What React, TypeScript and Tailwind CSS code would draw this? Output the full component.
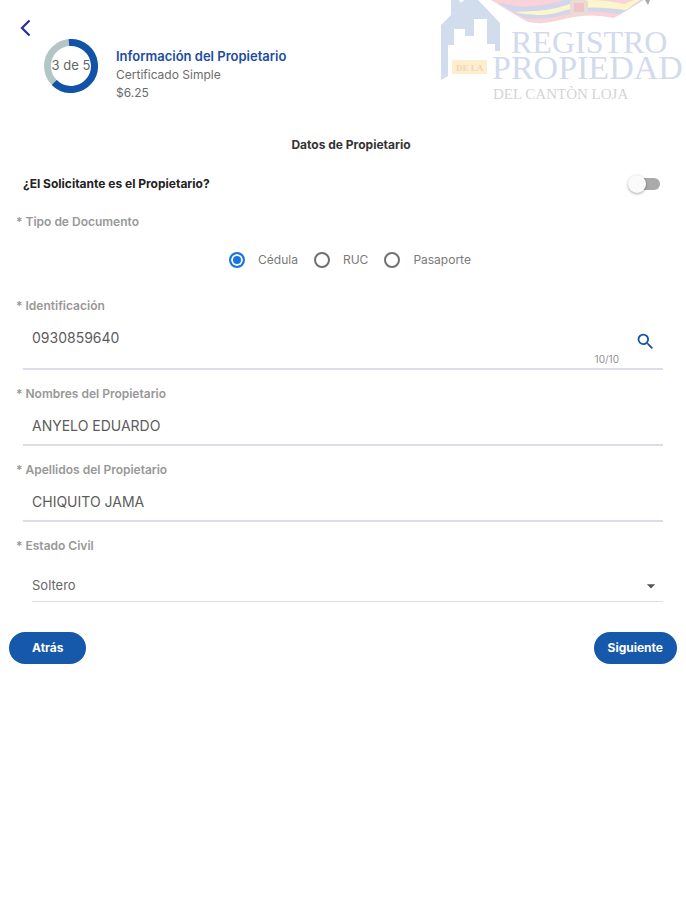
import React, { useState } from "react";
import { MdArrowDropDown, MdSearch } from "react-icons/md";

const RegistroLogo: React.FC = () => (
  <svg
    width="256"
    height="110"
    viewBox="0 0 256 110"
    className="shrink-0"
    role="img"
    aria-label="Registro de la Propiedad del Cantòn Loja"
  >
    {/* flag */}
    <path d="M61 0Q80 12 98 22Q112 25 130 20Q158 12 184 18Q200 9 214 0Z" fill="#f9d3d8" />
    <path d="M70 4Q82 12 94 18Q112 21 134 15Q160 9 190 14L212 0H70Z" fill="#d3d6ea" />
    <path d="M84 12Q112 19 136 10Q160 5 196 10L210 0H150Q120 12 84 12Z" fill="#fbf7cc" />
    <path d="M68 0Q82 11 104 11Q128 10 150 0Z" fill="#d3d6ea" />
    <path d="M62 0Q84 8 104 6Q122 4 134 0Z" fill="#f9d3d8" />
    <path d="M160 0Q176 0 194 4L204 0Z" fill="#f9d3d8" />
    <rect x="140" y="0" width="18" height="15" rx="3" fill="#e9dcd5" />
    <rect x="144" y="3" width="10" height="9" fill="#efc3c9" />
    <path d="M215 0H220L218 5Z" fill="#a9a9a9" />
    {/* buildings */}
    <path
      d="M11 80V25L21 15V0H29L31 3L34 0H48L70 23V51H65V44H57V19H44V36H35V29H24V45H18V76Z"
      fill="#d1dded"
    />
    <rect x="22" y="60" width="35" height="14" fill="#fdefcd" />
    <text
      x="26"
      y="71"
      fill="#f0d5bd"
      className="font-['Liberation_Serif',serif] text-[9px] font-bold"
    >
      DE LA
    </text>
    <g fill="#d3daed" className="font-['Liberation_Serif',serif]">
      <text x="81" y="53" className="text-[32px]">REGISTRO</text>
      <text x="62" y="79" className="text-[34px]">PROPIEDAD</text>
    </g>
    <text x="63" y="99" fill="#d4d4d6" className="font-['Liberation_Serif',serif] text-[15px]">
      DEL CANTÒN LOJA
    </text>
  </svg>
);

const StepRing: React.FC = () => (
  <svg width="54" height="54" viewBox="0 0 54 54" className="shrink-0">
    <circle cx="27" cy="27" r="23.5" fill="none" stroke="#b3c6c6" strokeWidth="7" />
    <circle
      cx="27"
      cy="27"
      r="23.5"
      fill="none"
      stroke="#1253a8"
      strokeWidth="7"
      pathLength="100"
      strokeDasharray="64 36"
      transform="rotate(-95 27 27)"
    />
    <text x="27" y="31" textAnchor="middle" fill="#666666" className="text-[13px]">
      3 de 5
    </text>
  </svg>
);

interface FieldProps {
  id: string;
  label: string;
  value: string;
  onChange: (value: string) => void;
  maxLength?: number;
  searchable?: boolean;
}

const Field: React.FC<FieldProps> = ({
  id,
  label,
  value,
  onChange,
  maxLength,
  searchable,
}) => {
  return (
    <div className="mt-4">
      <label htmlFor={id} className="block pl-4 text-xs leading-4 font-semibold text-[#989898]">
        * {label}
      </label>
      <div className="mx-[23px] flex items-center border-b-2 border-[#dcdcea] pl-[9px]">
        <div className="flex-1 pt-[11px] pb-[7px]">
          <input
            id={id}
            type="text"
            value={value}
            maxLength={maxLength}
            onChange={(e) => onChange(e.target.value)}
            className="block h-6 w-full bg-transparent text-sm text-[#5c5c5c] outline-none"
          />
          {maxLength && (
            <div className="-mb-1 pt-1 text-right text-[10px] leading-3 text-[#909090]">
              {value.length}/{maxLength}
            </div>
          )}
        </div>
        {searchable && (
          <button
            type="button"
            aria-label="Buscar"
            className="ml-2 flex h-9 w-9 items-center justify-center text-[#1253a8]"
          >
            <MdSearch size={21} />
          </button>
        )}
      </div>
    </div>
  );
};

const documentTypes = ["Cédula", "RUC", "Pasaporte"];

const App: React.FC = () => {
  const [isOwner, setIsOwner] = useState(false);
  const [documentType, setDocumentType] = useState("Cédula");
  const [identification, setIdentification] = useState("0930859640");
  const [names, setNames] = useState("ANYELO EDUARDO");
  const [lastNames, setLastNames] = useState("CHIQUITO JAMA");
  const [civilStatus, setCivilStatus] = useState("Soltero");

  return (
    <div className="min-h-screen bg-white font-[Inter,sans-serif]">
      <header className="flex items-start justify-between">
        <div className="flex pl-5">
          <button type="button" aria-label="Regresar" className="mt-[18px] h-5 w-3 text-[#2a2ca0]">
            <svg width="12" height="18" viewBox="0 0 12 18" fill="none">
              <path d="M9.5 1.5L2 9l7.5 7.5" stroke="currentColor" strokeWidth="2.2" />
            </svg>
          </button>
          <div className="mt-[39px] ml-3 flex gap-[18px]">
            <StepRing />
            <div className="pt-[7px]">
              <h1 className="text-[13px] leading-5 font-semibold text-[#1c4da1]">
                Información del Propietario
              </h1>
              <p className="text-xs leading-[18px] text-[#6c6c6c]">Certificado Simple</p>
              <p className="text-xs leading-[18px] text-[#6c6c6c]">$6.25</p>
            </div>
          </div>
        </div>
        <RegistroLogo />
      </header>

      <form onSubmit={(e) => e.preventDefault()}>
        <h2 className="mt-[27px] pl-4 text-center text-xs leading-4 font-bold text-[#333333]">
          Datos de Propietario
        </h2>

        <label className="mt-[19px] flex h-6 items-center justify-between pr-[26px] pl-[23px]">
          <span className="text-xs font-bold text-[#222222]">
            ¿El Solicitante es el Propietario?
          </span>
          <span className="relative flex h-5 w-8 items-center justify-end">
            <input
              type="checkbox"
              role="switch"
              checked={isOwner}
              onChange={(e) => setIsOwner(e.target.checked)}
              className="peer h-3 w-7 appearance-none rounded-full bg-[#aaaaaa] checked:bg-[#8fb4e3]"
            />
            <span className="pointer-events-none absolute left-0 h-[18px] w-[18px] rounded-full bg-[#fafafa] shadow-[0_1px_3px_rgba(0,0,0,0.35)] peer-checked:left-3.5 peer-checked:bg-[#1253a8]" />
          </span>
        </label>

        <fieldset className="mt-[18px]">
          <legend className="pl-4 text-xs leading-4 font-semibold text-[#989898]">
            * Tipo de Documento
          </legend>
          <div className="mt-5 flex justify-center gap-4 pl-3.5">
            {documentTypes.map((type) => (
              <label key={type} className="flex h-5 items-center gap-[13px] text-xs text-[#7a7a7a]">
                <input
                  type="radio"
                  name="documentType"
                  value={type}
                  checked={documentType === type}
                  onChange={() => setDocumentType(type)}
                  className="h-4 w-4 appearance-none rounded-full border-2 border-[#707070] checked:border-[#1a76dc] checked:bg-[#1a76dc] checked:shadow-[inset_0_0_0_2px_white]"
                />
                {type}
              </label>
            ))}
          </div>
        </fieldset>

        <div className="pt-3">
          <Field
            id="identification"
            label="Identificación"
            value={identification}
            onChange={setIdentification}
            maxLength={10}
            searchable
          />
        </div>
        <Field id="names" label="Nombres del Propietario" value={names} onChange={setNames} />
        <Field
          id="lastNames"
          label="Apellidos del Propietario"
          value={lastNames}
          onChange={setLastNames}
        />

        <div className="mt-4">
          <label
            htmlFor="civilStatus"
            className="block pl-4 text-xs leading-4 font-semibold text-[#989898]"
          >
            * Estado Civil
          </label>
          <div className="relative mt-5 mr-[23px] ml-8 border-b border-[#dedede] pb-[3px]">
            <select
              id="civilStatus"
              value={civilStatus}
              onChange={(e) => setCivilStatus(e.target.value)}
              className="block h-6 w-full appearance-none bg-transparent text-[13px] text-[#666666] outline-none"
            >
              <option>Soltero</option>
              <option>Casado</option>
              <option>Divorciado</option>
              <option>Viudo</option>
            </select>
            <MdArrowDropDown
              size={20}
              className="pointer-events-none absolute top-0.5 right-0.5 text-[#555555]"
            />
          </div>
        </div>

        <div className="mt-[30px] flex justify-between px-[9px] text-xs font-bold text-white">
          <button type="button" className="h-8 rounded-full bg-[#1658aa] px-[23px]">
            Atrás
          </button>
          <button type="submit" className="h-8 rounded-full bg-[#1658aa] px-3.5">
            Siguiente
          </button>
        </div>
      </form>
    </div>
  );
};

export default App;
